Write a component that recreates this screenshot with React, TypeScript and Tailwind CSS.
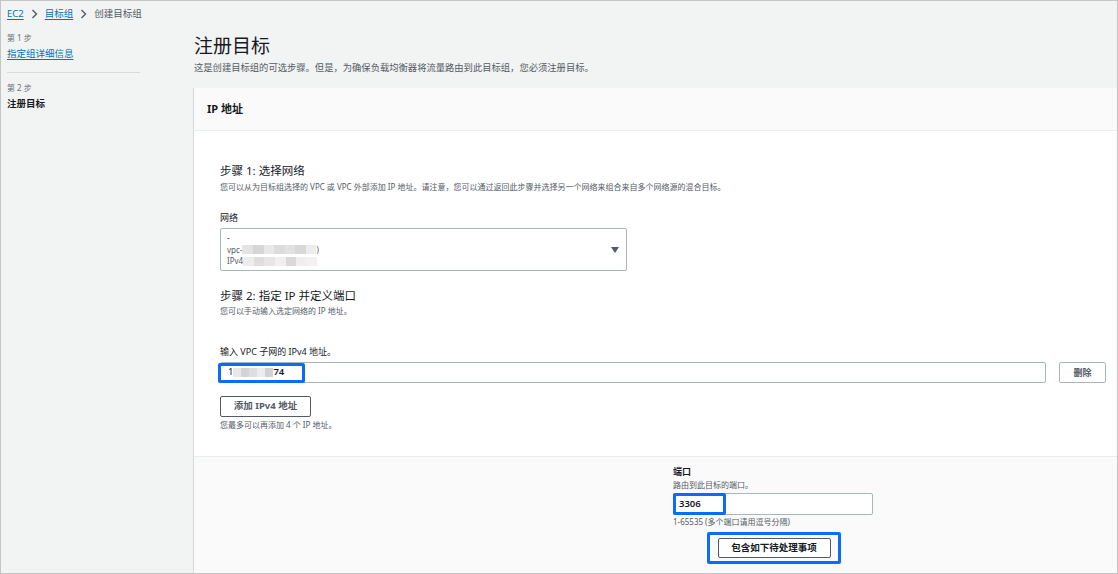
import React from "react";

const Chevron = () => (
  <svg width="7" height="10" viewBox="0 0 7 10" className="mx-[7px]">
    <path d="M1.5 1 L5.5 5 L1.5 9" fill="none" stroke="#545b64" strokeWidth="1.4" />
  </svg>
);

const Blur = ({ w, shades }: { w: number; shades: string[] }) => (
  <span className="inline-flex h-[9px] align-middle blur-[0.6px]" style={{ width: w }}>
    {shades.map((c, i) => (
      <span key={i} className="h-full flex-1" style={{ background: c }} />
    ))}
  </span>
);

export default function App() {
  return (
    <div className="w-[1118px] h-[574px] border border-[#c4c4c4] bg-[#f2f3f3] overflow-hidden flex flex-col font-['Noto_Sans','Noto_Sans_CJK_SC',sans-serif] text-[#16191f]">
      {/* breadcrumb */}
      <div className="h-[25px] flex items-center pl-[6px] text-[9.5px] leading-[12px]">
        <span className="text-[#0073bb] underline underline-offset-2">EC2</span>
        <Chevron />
        <span className="text-[#0073bb] underline underline-offset-2">目标组</span>
        <Chevron />
        <span className="text-[#545b64]">创建目标组</span>
      </div>
      <div className="flex flex-1 min-h-0">
        {/* sidebar */}
        <div className="w-[192px] pl-[6px] pt-[6px] flex flex-col">
          <div className="text-[8px] leading-[12px] text-[#687078]">第 1 步</div>
          <div className="mt-[3px] text-[9.5px] leading-[14px] text-[#0073bb] underline underline-offset-2">指定组详细信息</div>
          <div className="mt-[11px] h-px w-[133px] bg-[#d5dbdb]" />
          <div className="mt-[9px] text-[8px] leading-[12px] text-[#687078]">第 2 步</div>
          <div className="mt-[3px] text-[9.5px] leading-[14px] font-bold">注册目标</div>
        </div>
        {/* main */}
        <div className="flex-1 flex flex-col min-w-0">
          <div className="pt-[8px] pl-[1px] text-[19px] leading-[24px]">注册目标</div>
          <div className="mt-[4px] pl-[1px] text-[9.3px] leading-[12px] text-[#545b64]">
            这是创建目标组的可选步骤。但是，为确保负载均衡器将流量路由到此目标组，您必须注册目标。
          </div>
          <div className="mt-[14px] flex-1 flex flex-col border-l border-[#d5dbdb]">
            <div className="h-[43px] flex items-center pl-[13px] bg-[#fafafa] border-b border-[#eaeded] text-[11px] font-bold">
              IP 地址
            </div>
            <div className="bg-white pl-[26px] pr-[11px] pt-[32px] pb-[25px] flex flex-col">
              <div className="text-[11.5px] leading-[16px]">步骤 1: 选择网络</div>
              <div className="mt-[2px] text-[8px] leading-[12px] text-[#545b64] whitespace-nowrap">
                您可以从为目标组选择的 VPC 或 VPC 外部添加 IP 地址。请注意，您可以通过返回此步骤并选择另一个网络来组合来自多个网络源的混合目标。
              </div>
              <div className="mt-[19px] text-[9px] leading-[12px]">网络</div>
              <div className="mt-[4px] w-[407px] h-[43px] border border-[#aab7b8] rounded-[2px] flex items-center pl-[6px] pr-[7px]">
                <div className="flex-1 flex flex-col text-[8px] leading-[11.5px] text-[#16191f]">
                  <span>-</span>
                  <span className="flex items-center text-[#545b64]">
                    vpc-
                    <Blur w={74} shades={["#e4e4e4", "#d6d6d6", "#e8e8e8", "#dcdcdc", "#e2e2e2", "#d8d8d8", "#ececec"]} />
                    <span>)</span>
                  </span>
                  <span className="flex items-center text-[#545b64]">
                    IPv4
                    <Blur w={74} shades={["#ececec", "#dedede", "#e6e6e6", "#f0f0f0", "#d9d9d9", "#eeeeee", "#f2f2f2"]} />
                  </span>
                </div>
                <svg width="8" height="6" viewBox="0 0 8 6">
                  <path d="M0 0 H8 L4 6 Z" fill="#545b64" />
                </svg>
              </div>
              <div className="mt-[17px] text-[11.5px] leading-[16px]">步骤 2: 指定 IP 并定义端口</div>
              <div className="mt-[1px] text-[8px] leading-[12px] text-[#545b64]">您可以手动输入选定网络的 IP 地址。</div>
              <div className="mt-[29px] text-[9px] leading-[12px]">输入 VPC 子网的 IPv4 地址。</div>
              <div className="mt-[4px] flex items-center">
                <div className="relative w-[826px] h-[21px] border border-[#aab7b8] rounded-[2px] flex items-center pl-[7px] text-[9.5px]">
                  <span>1</span>
                  <Blur w={40} shades={["#e8e8e8", "#d4d4d4", "#dedede", "#ececec", "#d2d2d2"]} />
                  <span className="font-semibold">74</span>
                  <div className="absolute left-[-3px] top-[0px] w-[87px] h-[20px] border-[3px] border-[#0b6bff] rounded-[2px]" />
                </div>
                <button className="ml-[13px] w-[47px] h-[21px] border border-[#aab7b8] rounded-[2px] bg-white text-[9px] font-bold text-[#545b64]">
                  删除
                </button>
              </div>
              <button className="mt-[13px] w-[91px] h-[21px] border border-[#545b64] rounded-[2px] bg-white text-[9.5px] font-bold text-[#545b64]">
                添加 IPv4 地址
              </button>
              <div className="mt-[2px] text-[8px] leading-[12px] text-[#545b64]">您最多可以再添加 4 个 IP 地址。</div>
            </div>
            <div className="flex-1 bg-[#fafafa] border-t border-[#eaeded] pl-[479px] pt-[9px] flex flex-col">
              <div className="text-[9px] leading-[12px] font-bold">端口</div>
              <div className="mt-[1px] text-[8px] leading-[12px] text-[#545b64]">路由到此目标的端口。</div>
              <div className="mt-[2px] relative w-[200px] h-[22px] border border-[#aab7b8] rounded-[2px] bg-white flex items-center pl-[5px] text-[9.5px] font-semibold">
                3306
                <div className="absolute left-[-1px] top-[-1px] w-[53px] h-[22px] border-[3px] border-[#0b6bff] rounded-[2px]" />
              </div>
              <div className="mt-[1px] text-[8px] leading-[12px] text-[#545b64]">1-65535 (多个端口请用逗号分隔)</div>
              <div className="mt-[4px] ml-[34px] w-[134px] h-[32px] border-[3px] border-[#0b6bff] rounded-[2px] flex items-center justify-center">
                <button className="w-[113px] h-[20px] border border-[#545b64] rounded-[2px] bg-white text-[9.5px] font-bold text-[#16191f]">
                  包含如下待处理事项
                </button>
              </div>
            </div>
          </div>
        </div>
      </div>
    </div>
  );
}
